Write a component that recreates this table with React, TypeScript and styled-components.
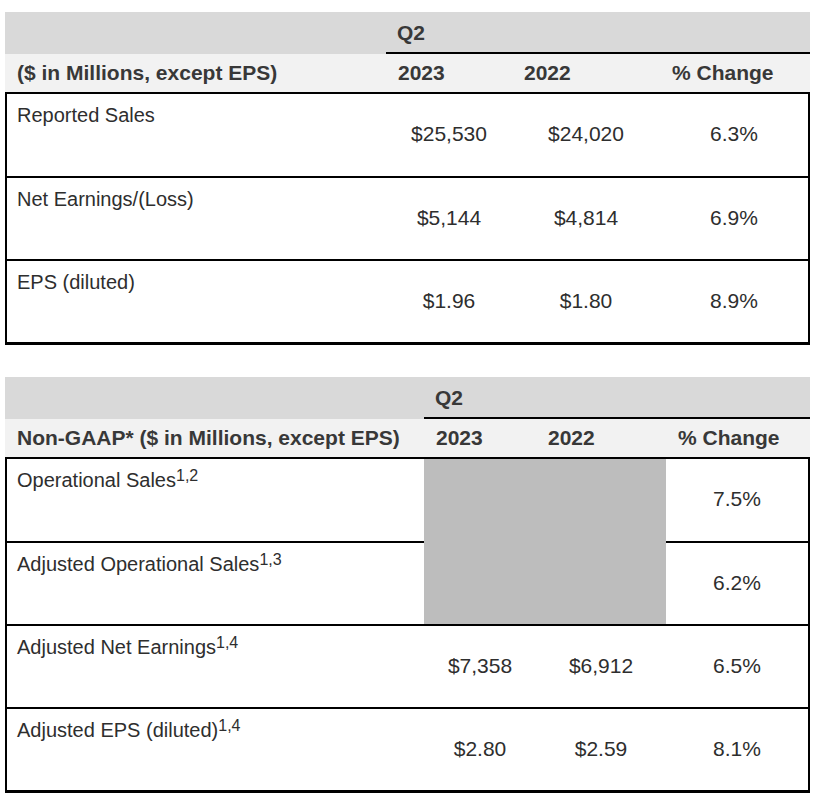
import React from "react"
import styled, { createGlobalStyle } from "styled-components"

const GlobalStyle = createGlobalStyle`
  html, body {
    margin: 0;
    padding: 0;
    background: #ffffff;
  }
  body {
    font-family: "Liberation Sans", Arial, sans-serif;
    color: #333333;
  }
`

interface Row {
  label: string
  sup?: string
  current?: string
  prior?: string
  change: string
}

interface TableSpec {
  title: string
  columns: string
  bodyColumns: string
  rows: Row[]
  blockRows?: number
}

const reported: TableSpec = {
  title: "($ in Millions, except EPS)",
  columns: "381px 126px 148px 150px",
  bodyColumns: "379px 126px 148px 148px",
  rows: [
    { label: "Reported Sales", current: "$25,530", prior: "$24,020", change: "6.3%" },
    { label: "Net Earnings/(Loss)", current: "$5,144", prior: "$4,814", change: "6.9%" },
    { label: "EPS (diluted)", current: "$1.96", prior: "$1.80", change: "8.9%" },
  ],
}

const nonGaap: TableSpec = {
  title: "Non-GAAP* ($ in Millions, except EPS)",
  columns: "419px 112px 130px 144px",
  bodyColumns: "417px 112px 130px 142px",
  blockRows: 2,
  rows: [
    { label: "Operational Sales", sup: "1,2", change: "7.5%" },
    { label: "Adjusted Operational Sales", sup: "1,3", change: "6.2%" },
    { label: "Adjusted Net Earnings", sup: "1,4", current: "$7,358", prior: "$6,912", change: "6.5%" },
    { label: "Adjusted EPS (diluted)", sup: "1,4", current: "$2.80", prior: "$2.59", change: "8.1%" },
  ],
}

const FinancialTable: React.FC<{ spec: TableSpec }> = ({ spec }) => {
  const block = spec.blockRows ?? 0
  return (
    <Table>
      <HeadRow $columns={spec.columns} $bg="#d9d9d9" $height={42}>
        <HeadCell />
        <PeriodCell>Q2</PeriodCell>
      </HeadRow>
      <HeadRow $columns={spec.columns} $bg="#f2f2f2" $height={38}>
        <HeadCell>{spec.title}</HeadCell>
        <HeadCell>2023</HeadCell>
        <HeadCell>2022</HeadCell>
        <HeadCell>% Change</HeadCell>
      </HeadRow>
      <Body $columns={spec.bodyColumns} $rows={spec.rows.length}>
        {spec.rows.map((row, i) => (
          <React.Fragment key={row.label}>
            <LabelCell $first={i === 0} style={{ gridRow: i + 1 }}>
              {row.label}
              {row.sup && <Sup>{row.sup}</Sup>}
            </LabelCell>
            {i >= block && (
              <>
                <ValueCell $first={i === 0} style={{ gridRow: i + 1 }}>
                  {row.current}
                </ValueCell>
                <ValueCell $first={i === 0} style={{ gridRow: i + 1 }}>
                  {row.prior}
                </ValueCell>
              </>
            )}
            <ValueCell $first={i === 0} style={{ gridRow: i + 1, gridColumn: 4 }}>
              {row.change}
            </ValueCell>
          </React.Fragment>
        ))}
        {block > 0 && <BlockedCell style={{ gridRow: `1 / span ${block}` }} />}
      </Body>
    </Table>
  )
}

const App: React.FC = () => (
  <>
    <GlobalStyle />
    <Page>
      <FinancialTable spec={reported} />
      <FinancialTable spec={nonGaap} />
    </Page>
  </>
)

const Page = styled.div`
  display: flex;
  flex-direction: column;
  gap: 32px;
  padding: 12px 0 0 5px;
`

const Table = styled.div`
  width: 805px;
  display: flex;
  flex-direction: column;
`

const HeadRow = styled.div<{ $columns: string; $bg: string; $height: number }>`
  display: grid;
  grid-template-columns: ${({ $columns }) => $columns};
  height: ${({ $height }) => $height}px;
  background: ${({ $bg }) => $bg};
`

const HeadCell = styled.div`
  display: flex;
  align-items: center;
  padding-left: 12px;
  font-size: 21px;
  font-weight: 700;
  color: #383838;
  white-space: nowrap;
`

const PeriodCell = styled(HeadCell)`
  grid-column: 2 / -1;
  padding-left: 11px;
  border-bottom: 2px solid #000000;
  padding-top: 2px;
`

const Body = styled.div<{ $columns: string; $rows: number }>`
  display: grid;
  grid-template-columns: ${({ $columns }) => $columns};
  grid-template-rows: 82px repeat(${({ $rows }) => $rows - 1}, 83px);
  border: 2px solid #000000;
  border-bottom-width: 3px;
`

const Cell = styled.div<{ $first: boolean }>`
  border-top: ${({ $first }) => ($first ? "none" : "2px solid #000000")};
  font-size: 20px;
  color: #2e2e2e;
`

const LabelCell = styled(Cell)`
  grid-column: 1;
  padding: 10px 0 0 10px;
  line-height: 23px;
  white-space: nowrap;
`

const ValueCell = styled(Cell)`
  display: flex;
  align-items: center;
  justify-content: center;
  font-size: 21px;
  padding-bottom: 2px;
`

const Sup = styled.sup`
  font-size: 16px;
  line-height: 0;
  vertical-align: 6px;
`

const BlockedCell = styled.div`
  grid-column: 2 / span 2;
  background: #bdbdbd;
`

export default App
